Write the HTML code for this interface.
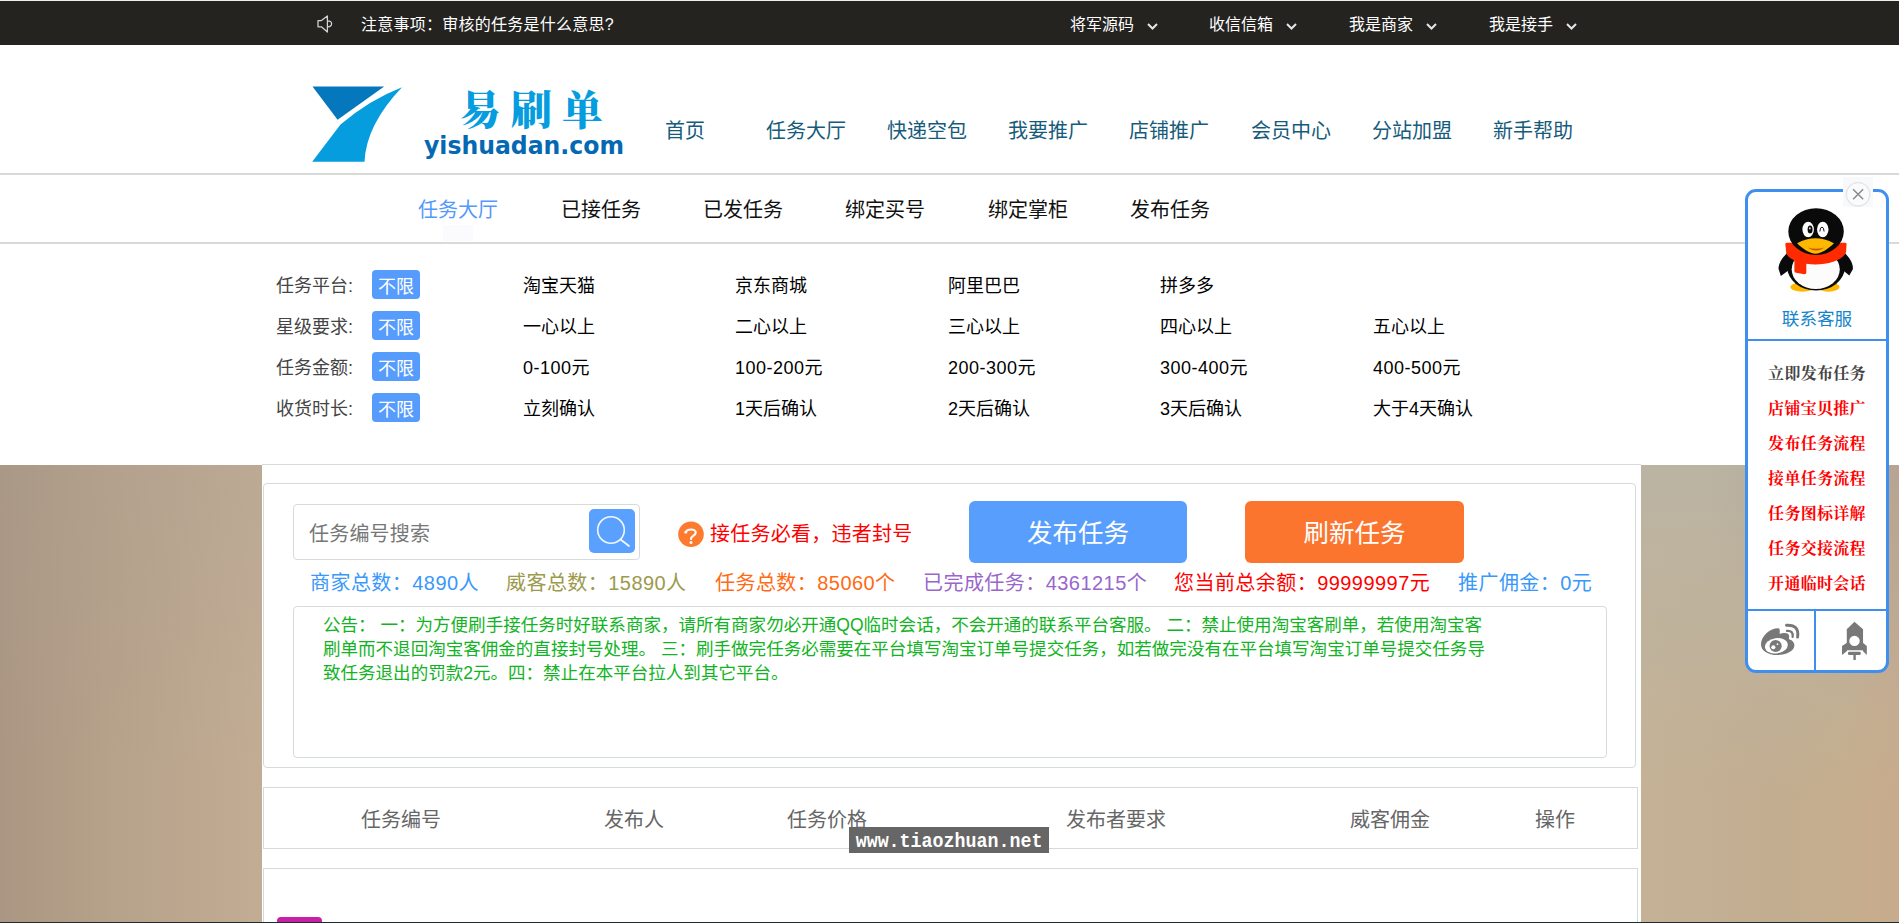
<!DOCTYPE html>
<html lang="zh-CN">
<head>
<meta charset="utf-8">
<title>易刷单 - 任务大厅</title>
<style>
*{box-sizing:border-box;margin:0;padding:0}
html,body{width:1899px;height:923px;overflow:hidden;background:#fff}
body{position:relative;font-family:"Liberation Sans","Noto Sans CJK SC",sans-serif;color:#000;-webkit-font-smoothing:antialiased}
.abs{position:absolute;white-space:nowrap}
a{text-decoration:none;color:inherit}
/* top bar */
#topline{left:0;top:0;width:1899px;height:1px;background:#efefef}
#topbar{left:0;top:1px;width:1899px;height:44px;background:#24231f}
.tb{color:#fff;font-size:16px;line-height:20px;top:15px}
.chev{top:23px}
/* nav */
.nav{color:#165b7b;font-size:20px;line-height:26px;top:118px}
#hr1{left:0;top:173px;width:1899px;height:2px;background:#d7dbd8}
.sub{color:#111;font-size:20px;line-height:26px;top:197px}
#hr2{left:0;top:242px;width:1899px;height:2px;background:#d7dbd8}
/* filter */
.fl{color:#444;font-size:18px;line-height:24px;left:276px}
.fo{color:#000;font-size:18px;line-height:24px}
.bx{left:372px;width:48px;height:29px;border-radius:4px;background:#569cfd;color:#fff;font-size:18px;line-height:24px;padding-top:5px;text-align:center}
/* main */
#bg{left:0;top:465px;width:1899px;height:458px;background:#bfaa92}
#wrap{left:262px;top:464px;width:1379px;height:459px;background:#fff;border-top:1px solid #d5dbd8}
.box{border:1px solid #d5dbd8;border-radius:4px;background:#fff}
.st{font-size:20px;line-height:26px;top:570px;letter-spacing:.45px}
.th{font-size:20px;line-height:26px;top:807px;color:#666}
.sl{left:1748px;width:138px;text-align:center;font-family:"Liberation Serif","Noto Serif CJK SC",serif;font-weight:bold;font-size:16px;line-height:24px;letter-spacing:.3px}
</style>
</head>
<body>
<div id="topline" class="abs"></div>
<div id="topbar" class="abs"></div>
<svg class="abs" style="left:317px;top:14.5px" width="17" height="18" viewBox="0 0 17 18"><path d="M1 5.6h3.4L10.4 1v16L4.4 11.8H1z M10.6 5.8a4 3 0 0 1 0 6" fill="none" stroke="#d4d4d4" stroke-width="1.25" stroke-linejoin="round"/></svg>
<div class="abs tb" style="left:361px;letter-spacing:0.25px">注意事项：审核的任务是什么意思?</div>
<div class="abs tb" style="left:1070px">将军源码</div>
<svg class="abs chev" style="left:1147px" width="11" height="7" viewBox="0 0 11 7"><path d="M1 1l4.5 4.5L10 1" fill="none" stroke="#e6e6e6" stroke-width="2"/></svg>
<div class="abs tb" style="left:1209px">收信信箱</div>
<svg class="abs chev" style="left:1286px" width="11" height="7" viewBox="0 0 11 7"><path d="M1 1l4.5 4.5L10 1" fill="none" stroke="#e6e6e6" stroke-width="2"/></svg>
<div class="abs tb" style="left:1349px">我是商家</div>
<svg class="abs chev" style="left:1426px" width="11" height="7" viewBox="0 0 11 7"><path d="M1 1l4.5 4.5L10 1" fill="none" stroke="#e6e6e6" stroke-width="2"/></svg>
<div class="abs tb" style="left:1489px">我是接手</div>
<svg class="abs chev" style="left:1566px" width="11" height="7" viewBox="0 0 11 7"><path d="M1 1l4.5 4.5L10 1" fill="none" stroke="#e6e6e6" stroke-width="2"/></svg>

<!-- LOGO -->
<svg id="logo" class="abs" style="left:312px;top:85px" width="316" height="82" viewBox="0 0 316 82">
<path d="M0.5 1.6H72.2L25.6 34.8z" fill="#0578bd"/>
<path d="M0.2 76.8L28.5 39.5Q57 15 90 2.2Q54 40 52.5 76.8z" fill="#069ddf"/>
<text x="148" y="40" font-family="'Liberation Serif','Noto Serif CJK SC',serif" font-weight="900" font-size="41" fill="#069ddf" letter-spacing="10">易刷单</text>
<text x="112" y="69" font-family="'DejaVu Sans','Liberation Sans',sans-serif" font-weight="bold" font-size="24.5" fill="#0568b2" textLength="200" lengthAdjust="spacingAndGlyphs">yishuadan.com</text>
</svg>

<a class="abs nav" style="left:665px">首页</a>
<a class="abs nav" style="left:766px">任务大厅</a>
<a class="abs nav" style="left:887px">快递空包</a>
<a class="abs nav" style="left:1008px">我要推广</a>
<a class="abs nav" style="left:1129px">店铺推广</a>
<a class="abs nav" style="left:1251px">会员中心</a>
<a class="abs nav" style="left:1372px">分站加盟</a>
<a class="abs nav" style="left:1493px">新手帮助</a>
<div id="hr1" class="abs"></div>

<a class="abs sub" style="left:418px;color:#5399fb">任务大厅</a>
<a class="abs sub" style="left:561px">已接任务</a>
<a class="abs sub" style="left:703px">已发任务</a>
<a class="abs sub" style="left:845px">绑定买号</a>
<a class="abs sub" style="left:988px">绑定掌柜</a>
<a class="abs sub" style="left:1130px">发布任务</a>
<div class="abs" style="left:443px;top:225px;width:30px;height:16px;background:#fbfbfe"></div>
<div id="hr2" class="abs"></div>

<!-- FILTERS -->
<div class="abs fl" style="top:274px">任务平台:</div>
<div class="abs fl" style="top:315px">星级要求:</div>
<div class="abs fl" style="top:356px">任务金额:</div>
<div class="abs fl" style="top:397px">收货时长:</div>
<div class="abs bx" style="top:270px">不限</div>
<div class="abs bx" style="top:311px">不限</div>
<div class="abs bx" style="top:352px">不限</div>
<div class="abs bx" style="top:393px">不限</div>

<div class="abs fo" style="left:523px;top:274px">淘宝天猫</div>
<div class="abs fo" style="left:735px;top:274px">京东商城</div>
<div class="abs fo" style="left:948px;top:274px">阿里巴巴</div>
<div class="abs fo" style="left:1160px;top:274px">拼多多</div>

<div class="abs fo" style="left:523px;top:315px">一心以上</div>
<div class="abs fo" style="left:735px;top:315px">二心以上</div>
<div class="abs fo" style="left:948px;top:315px">三心以上</div>
<div class="abs fo" style="left:1160px;top:315px">四心以上</div>
<div class="abs fo" style="left:1373px;top:315px">五心以上</div>

<div class="abs fo" style="left:523px;top:356px;letter-spacing:.5px">0-100元</div>
<div class="abs fo" style="left:735px;top:356px;letter-spacing:.5px">100-200元</div>
<div class="abs fo" style="left:948px;top:356px;letter-spacing:.5px">200-300元</div>
<div class="abs fo" style="left:1160px;top:356px;letter-spacing:.5px">300-400元</div>
<div class="abs fo" style="left:1373px;top:356px;letter-spacing:.5px">400-500元</div>

<div class="abs fo" style="left:523px;top:397px">立刻确认</div>
<div class="abs fo" style="left:735px;top:397px">1天后确认</div>
<div class="abs fo" style="left:948px;top:397px">2天后确认</div>
<div class="abs fo" style="left:1160px;top:397px">3天后确认</div>
<div class="abs fo" style="left:1373px;top:397px">大于4天确认</div>

<!-- MAIN -->
<div id="bg" class="abs"></div>
<div class="abs" style="left:0;top:465px;width:262px;height:458px;background:linear-gradient(180deg,rgba(165,160,152,.2) 0%,rgba(165,160,152,0) 65%),linear-gradient(90deg,#ab9683 0%,#b6a18a 42%,#c2ac94 100%)"></div>
<div class="abs" style="left:1641px;top:465px;width:258px;height:458px;background:linear-gradient(90deg,rgba(198,165,142,0) 78%,rgba(198,165,142,.4) 100%),radial-gradient(ellipse 75% 55% at 100% 0%,rgba(166,150,136,.55) 0%,rgba(166,150,136,0) 100%),linear-gradient(180deg,rgba(187,180,163,1) 0%,rgba(189,179,158,.65) 38%,rgba(196,176,146,0) 72%),linear-gradient(90deg,#c5b296 0%,#c2ad91 50%,#c8af8b 100%)"></div>
<div id="wrap" class="abs"></div>
<div class="abs box" style="left:263px;top:483px;width:1373px;height:285px"></div>
<div class="abs box" style="left:293px;top:504px;width:347px;height:56px"></div>
<div class="abs" style="left:309px;top:521px;font-size:20px;line-height:26px;letter-spacing:.2px;color:#777">任务编号搜索</div>
<div class="abs" style="left:589px;top:509px;width:46px;height:44px;border-radius:5px;background:#5aa0fe"></div>
<svg class="abs" style="left:589px;top:509px" width="46" height="44" viewBox="0 0 46 44"><circle cx="22" cy="21" r="13.3" fill="none" stroke="#f2f7ff" stroke-width="1.6"/><path d="M31.5 30.5L40 37" stroke="#f2f7ff" stroke-width="1.8" stroke-linecap="round"/></svg>
<svg class="abs" style="left:678px;top:521px" width="26" height="27" viewBox="0 0 26 27"><circle cx="13" cy="13.3" r="12.8" fill="#fd7a2f"/><path d="M7.8 11.2C9 7.8 17.8 7.4 17.8 11.6C17.8 14.6 13 14.8 13 18" fill="none" stroke="#fff" stroke-width="2.1" stroke-linecap="round"/><circle cx="7.8" cy="11.2" r="1.4" fill="#fff"/><circle cx="13" cy="21.6" r="1.5" fill="#fff"/></svg>

<div class="abs" style="left:710px;top:521px;font-size:20px;line-height:26px;letter-spacing:.25px;color:#f00">接任务必看，违者封号</div>
<div class="abs" style="left:969px;top:501px;width:218px;height:62px;border-radius:6px;background:#589efc;color:#fff;font-size:25.5px;line-height:64px;text-align:center">发布任务</div>
<div class="abs" style="left:1245px;top:501px;width:219px;height:62px;border-radius:6px;background:#fb752f;color:#fff;font-size:25.5px;line-height:64px;text-align:center">刷新任务</div>

<div class="abs st" style="left:310px;color:#3a98fb">商家总数：4890人</div>
<div class="abs st" style="left:506px;color:#9c9a4c">威客总数：15890人</div>
<div class="abs st" style="left:715px;color:#ff6a14">任务总数：85060个</div>
<div class="abs st" style="left:923px;color:#9966cc">已完成任务：4361215个</div>
<div class="abs st" style="left:1174px;color:#f00">您当前总余额：99999997元</div>
<div class="abs st" style="left:1458px;color:#3a98fb">推广佣金：0元</div>

<div class="abs box" style="left:293px;top:606px;width:1314px;height:152px"></div>
<div class="abs" style="left:323px;top:613px;font-size:17.54px;line-height:24px;color:#12b324">公告： 一：为方便刷手接任务时好联系商家，请所有商家勿必开通QQ临时会话，不会开通的联系平台客服。 二：禁止使用淘宝客刷单，若使用淘宝客<br>刷单而不退回淘宝客佣金的直接封号处理。 三：刷手做完任务必需要在平台填写淘宝订单号提交任务，如若做完没有在平台填写淘宝订单号提交任务导<br>致任务退出的罚款2元。四：禁止在本平台拉人到其它平台。</div>

<div class="abs box" style="left:263px;top:787px;width:1375px;height:62px;border-radius:0"></div>
<div class="abs th" style="left:361px">任务编号</div>
<div class="abs th" style="left:604px">发布人</div>
<div class="abs th" style="left:787px">任务价格</div>
<div class="abs th" style="left:1066px">发布者要求</div>
<div class="abs th" style="left:1350px">威客佣金</div>
<div class="abs th" style="left:1535px">操作</div>
<div class="abs" style="left:849px;top:827px;width:200px;height:26px;background:#666;color:#fff;font-family:'Liberation Mono','DejaVu Sans Mono',monospace;font-weight:bold;font-size:20px;line-height:26px;text-align:center;overflow:hidden"><span style="display:inline-block;transform:scaleX(.915);transform-origin:50% 50%;margin:0 -10px;position:relative;top:2px">www.tiaozhuan.net</span></div>

<div class="abs box" style="left:263px;top:868px;width:1375px;height:80px;border-radius:0"></div>
<div class="abs" style="left:277px;top:917px;width:45px;height:20px;border-radius:4px;background:#c81fa4"></div>
<div class="abs" style="left:0;top:922px;width:1899px;height:1px;background:#1f2c30"></div>

<!-- SIDE WIDGET -->
<div id="side" class="abs" style="left:1745px;top:189px;width:144px;height:484px;border:3px solid #3f8ff0;border-radius:11px;background:#fff"></div>
<div class="abs" style="left:1748px;top:339px;width:138px;height:2px;background:#3f8ff0"></div>
<div class="abs" style="left:1748px;top:609px;width:138px;height:2px;background:#3f8ff0"></div>
<div class="abs" style="left:1814px;top:611px;width:2px;height:59px;background:#3f8ff0"></div>
<div class="abs" style="left:1843px;top:177px;width:30px;height:30px;background:#f8f9fb"></div>
<svg class="abs" style="left:1843px;top:179px" width="30" height="30" viewBox="0 0 30 30"><circle cx="15.1" cy="15.3" r="12.6" fill="#eef0f2"/><circle cx="15.1" cy="15.3" r="11.7" fill="#fafbfc" stroke="#e0e1e3" stroke-width="1"/><path d="M10.1 10.3l10 10M20.1 10.3l-10 10" stroke="#8a8a8a" stroke-width="1.5"/></svg>
<svg class="abs" style="left:1770px;top:200px" width="92" height="100" viewBox="0 0 849 923">
<ellipse cx="300" cy="803" rx="112" ry="44" fill="#ffb600"/>
<ellipse cx="540" cy="803" rx="102" ry="44" fill="#ffb600"/>
<path d="M240 430C120 500 72 590 80 640L100 702L210 620z" fill="#0a0a0a"/>
<path d="M610 430C730 500 772 590 764 640L732 698L640 620z" fill="#0a0a0a"/>
<ellipse cx="425" cy="620" rx="266" ry="215" fill="#0a0a0a"/>
<ellipse cx="422" cy="640" rx="222" ry="182" fill="#fcfcfc"/>
<path d="M141 404Q146 392 166 395H684Q704 392 707 404L702 482C640 630 210 630 150 492z" fill="#ff2a00"/>
<ellipse cx="425" cy="291" rx="256" ry="216" fill="#0a0a0a"/>
<path d="M225 530H335V670Q335 686 318 686L240 672Q225 668 225 655z" fill="#ff2a00"/>
<path d="M250 400Q420 308 590 400C545 448 470 496 420 496C370 496 295 448 250 400z" fill="#ffb800"/>
<path d="M345 438Q420 462 505 438Q425 492 345 438z" fill="#c8500a"/>
<ellipse cx="352" cy="272" rx="53" ry="72" fill="#fff"/>
<ellipse cx="487" cy="272" rx="53" ry="71" fill="#fff"/>
<ellipse cx="370" cy="272" rx="23" ry="36" fill="#0a0a0a"/>
<ellipse cx="368" cy="262" rx="7" ry="10" fill="#fff"/>
<path d="M460 287Q462 250 480 250Q497 250 499 287" fill="none" stroke="#0a0a0a" stroke-width="9" stroke-linecap="round"/>
</svg>
<div class="abs" style="left:1748px;top:307px;width:138px;text-align:center;font-size:17.6px;line-height:24px;color:#1484cc">联系客服</div>
<a class="abs sl" style="top:362px;color:#444">立即发布任务</a>
<a class="abs sl" style="top:397px;color:#f00">店铺宝贝推广</a>
<a class="abs sl" style="top:432px;color:#f00">发布任务流程</a>
<a class="abs sl" style="top:467px;color:#f00">接单任务流程</a>
<a class="abs sl" style="top:502px;color:#f00">任务图标详解</a>
<a class="abs sl" style="top:537px;color:#f00">任务交接流程</a>
<a class="abs sl" style="top:572px;color:#f00">开通临时会话</a>
<svg class="abs" style="left:1735px;top:590px" width="164" height="100" viewBox="0 0 1514 923">
<g fill="#787878">
<path d="M240 500C240 420 330 350 400 352C420 352 412 395 412 405C440 395 500 385 500 425C500 440 495 450 500 455C535 465 550 490 548 515C545 565 470 600 395 600C300 600 240 560 240 500z"/>
</g>
<ellipse cx="382" cy="515" rx="106" ry="70" fill="#fff" transform="rotate(-8 382 515)"/>
<circle cx="375" cy="517" r="56" fill="#787878"/>
<circle cx="354" cy="528" r="19" fill="#fff"/>
<circle cx="392" cy="500" r="8" fill="#fff"/>
<path d="M480 378Q540 372 532 432" fill="none" stroke="#787878" stroke-width="21" stroke-linecap="round"/>
<path d="M475 325Q595 318 578 435" fill="none" stroke="#787878" stroke-width="27" stroke-linecap="round"/>
<g fill="#787878">
<path d="M1103 293L1182 362V556H1032V362z"/>
<path d="M1034 488L988 518V600L1034 562z"/>
<path d="M1180 488L1217 518V600L1180 562z"/>
<rect x="1043" y="570" width="118" height="30" rx="12"/>
<rect x="1093" y="596" width="22" height="50"/>
</g>
<circle cx="1103" cy="470" r="48" fill="#fff"/>
</svg>
</body>
</html>
